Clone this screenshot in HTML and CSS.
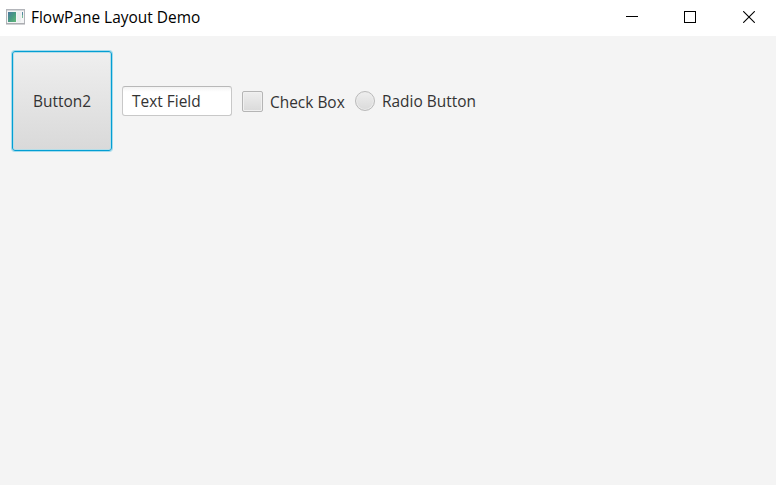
FILE: index.html
```html
<!DOCTYPE html>
<html lang="en">
<head>
<meta charset="utf-8">
<title>FlowPane Layout Demo</title>
<link rel="stylesheet" href="styles.css">
</head>
<body>
<header class="titlebar">
  <svg class="app-icon" width="20" height="16" viewBox="0 0 20 16">
    <defs>
      <linearGradient id="screen" x1="0" y1="0" x2="1" y2="1">
        <stop offset="0" stop-color="#4c78a0"/>
        <stop offset=".5" stop-color="#489a83"/>
        <stop offset="1" stop-color="#62b878"/>
      </linearGradient>
    </defs>
    <rect x=".5" y=".5" width="18" height="14" fill="#f4f5f6" stroke="#b3b5ba"/>
    <path d="M0 15h19" stroke="#a2a4a9"/>
    <path d="M1 1.5h17" stroke="#d5d7da"/>
    <rect x="2" y="3" width="8" height="10" fill="url(#screen)"/>
    <path d="M11 3h4v10h-4z" fill="#eceeef"/>
    <path d="M16.5 3v3" stroke="#5488a0"/>
    <path d="M16.5 6v3" stroke="#75b996"/>
  </svg>
  <span class="title">FlowPane Layout Demo</span>
  <div class="controls">
    <svg width="12" height="12"><path d="M0 5.5h12" stroke="#000"/></svg>
    <svg width="12" height="12"><rect x=".5" y=".5" width="11" height="11" fill="none" stroke="#000"/></svg>
    <svg width="12" height="12"><path d="M.2.2 11.8 11.8M11.8.2.2 11.8" stroke="#000" stroke-width="1.1"/></svg>
  </div>
</header>
<main class="flow-pane">
  <button class="button"><span class="label">Button2</span></button>
  <div class="text-field"><span class="label">Text Field</span></div>
  <div class="check-box"><span class="box"></span><span class="label">Check Box</span></div>
  <div class="radio-button"><span class="dot"></span><span class="label">Radio Button</span></div>
</main>
</body>
</html>
```
FILE: styles.css
```css
* {
  box-sizing: border-box;
}

body {
  margin: 0;
  height: 485px;
  overflow: hidden;
  background: #f4f4f4;
  font: 15.45px/20px "Open Sans", "Noto Sans", sans-serif;
  color: #333;
}

.titlebar {
  display: flex;
  align-items: center;
  height: 36px;
  padding: 0 21px 2px 6px;
  background: #fff;
  color: #000;
}

.title {
  margin-left: 5px;
  white-space: nowrap;
}

.controls {
  display: flex;
  gap: 47px;
  margin-left: auto;
}

.controls svg:first-child {
  margin-right: -1px;
}

.controls svg,
.app-icon {
  display: block;
}

.flow-pane {
  display: flex;
  align-items: center;
  gap: 10px;
  padding: 15px 12px;
}

.label {
  display: block;
  white-space: nowrap;
}

.button {
  width: 100px;
  height: 100px;
  padding: 0;
  border: 1px solid #039ed3;
  border-radius: 3px;
  background: linear-gradient(#efefef, #d9d9d9);
  box-shadow: 0 0 0 1px #a5dbec, inset 0 0 0 1px #b5dde8;
  font: inherit;
  color: inherit;
}

.text-field {
  display: flex;
  align-items: center;
  width: 110px;
  height: 30px;
  padding-left: 9px;
  border: 1px solid #c8c8c8;
  border-top-color: #b8b8b8;
  border-radius: 3px;
  background: linear-gradient(#f3f3f3, #fff 5px);
}

.check-box,
.radio-button {
  display: flex;
  align-items: center;
}

.check-box {
  gap: 7px;
  width: 103px;
}

.check-box .label {
  padding-top: 2px;
}

.box {
  width: 21px;
  height: 21px;
  border: 1px solid #b5b5b5;
  border-radius: 2px;
  background: linear-gradient(#eee, #dadada);
  box-shadow: inset 0 0 0 1px #f0f0f0;
}

.radio-button {
  gap: 7px;
}

.dot {
  width: 20px;
  height: 20px;
  border: 1px solid #bababa;
  border-radius: 50%;
  background: linear-gradient(#eee, #dadada);
  box-shadow: inset 0 0 0 1px #ececec;
}
```
